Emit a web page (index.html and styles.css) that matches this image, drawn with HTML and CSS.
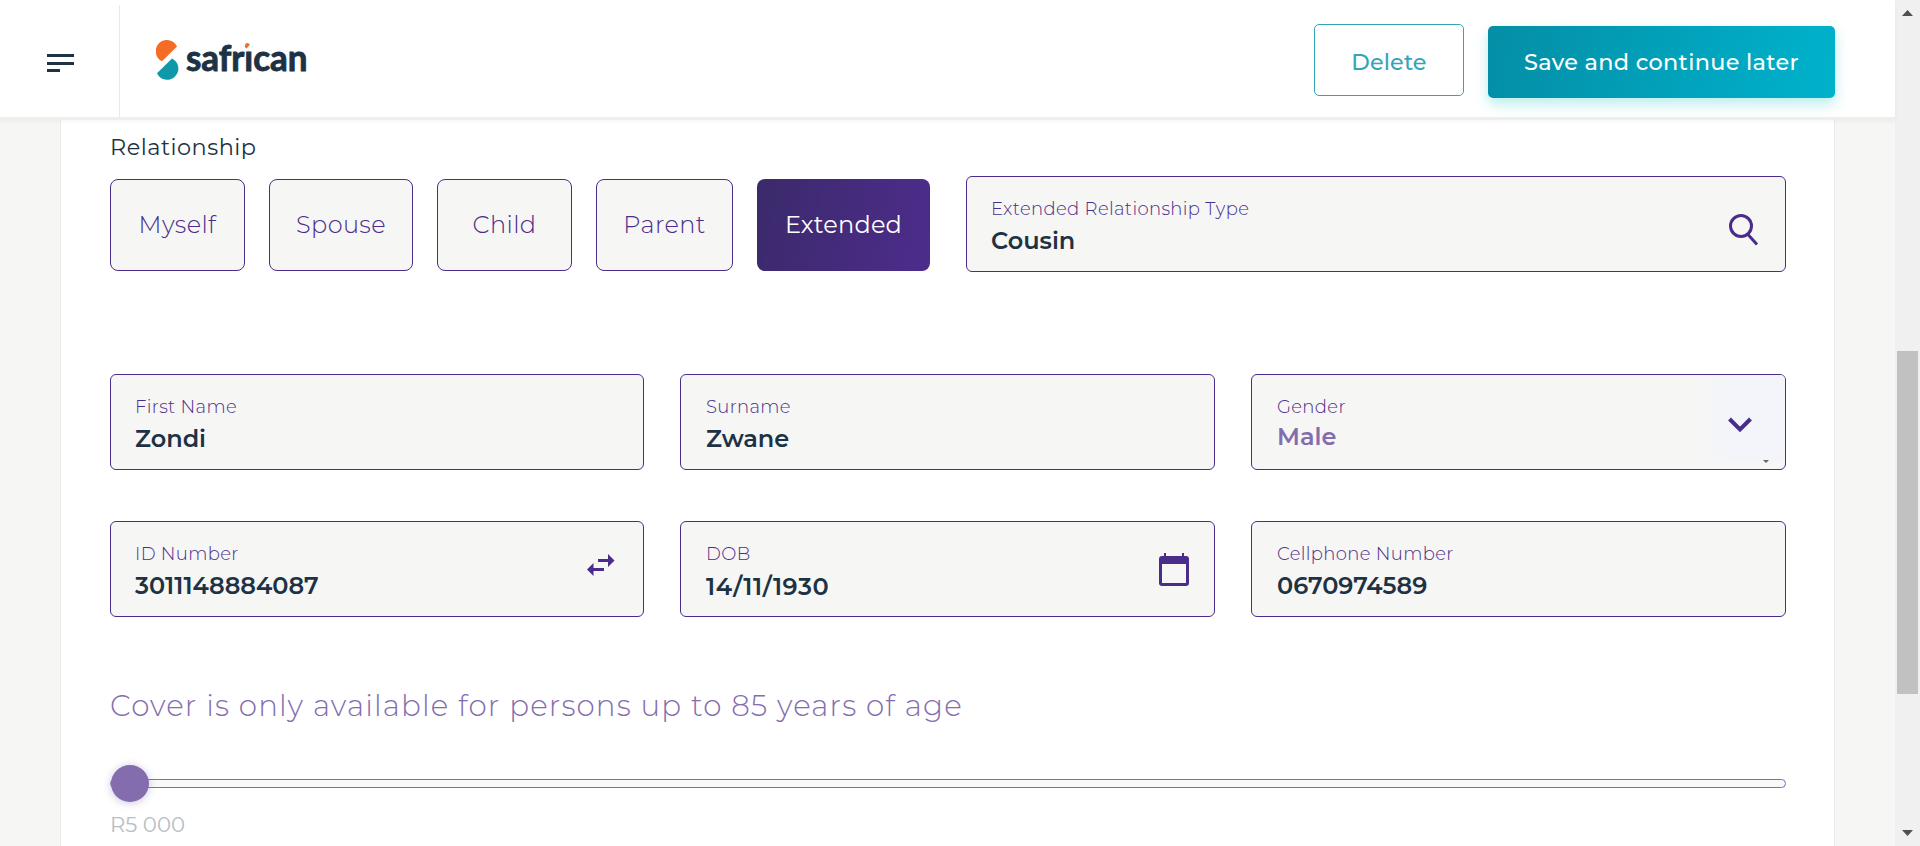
FILE: index.html
```html
<!DOCTYPE html>
<html lang="en">
<head>
<meta charset="utf-8">
<title>Safrican</title>
<link rel="stylesheet" href="styles.css">
</head>
<body>
<div class="page">
  <header class="header">
    <div class="menu">
      <svg width="27" height="18" viewBox="0 0 27 18" fill="#1d3244"><path d="M0 0h27v3H0zM0 8h27v3H0zM0 15h13v3H0z"/></svg>
    </div>
    <svg class="logo" width="164" height="44" viewBox="0 0 164 44">
      <path d="M6 21.300A11.200 11.200 0 1 1 21 6.500z" fill="#f46c25"/>
      <path d="M16 18.500A11.200 11.200 0 1 1 1 33.300z" fill="#0e98aa"/>
      <text class="wordmark" x="30" y="31" textLength="121.500" lengthAdjust="spacingAndGlyphs">safrican</text>
      <path d="M87 1h9v9.500h-9z" fill="#fff"/>
      <path d="M90.500 8.500a2.800 2.800 0 1 1 3.500-4z" fill="#f46c25"/>
    </svg>
    <div class="actions">
      <button class="btn delete">Delete</button>
      <button class="btn save">Save and continue later</button>
    </div>
  </header>
  <main class="card">
    <p class="caption">Relationship</p>
    <div class="relationship">
      <button class="choice w-myself">Myself</button>
      <button class="choice w-spouse">Spouse</button>
      <button class="choice w-child">Child</button>
      <button class="choice w-parent">Parent</button>
      <button class="choice w-extended selected">Extended</button>
      <div class="field type">
        <span class="label">Extended Relationship Type</span><span class="value">Cousin</span>
        <svg class="icon search" width="32" height="34" viewBox="0 0 32 34" fill="none" stroke="#4a2c8a" stroke-width="3"><circle cx="13" cy="13" r="10.500"/><path d="M19.500 21l9.500 10.500"/></svg>
      </div>
    </div>
    <div class="grid">
      <div class="field"><span class="label">First Name</span><span class="value">Zondi</span></div>
      <div class="field inset"><span class="label">Surname</span><span class="value">Zwane</span></div>
      <div class="field inset"><span class="label">Gender</span><span class="value soft">Male</span>
        <span class="arrow"><svg width="24" height="16" viewBox="0 0 24 16" fill="none" stroke="#4a2c8a" stroke-width="4"><path d="M1.500 2L12 12.500 22.500 2"/></svg></span>
        <svg class="caret" width="6" height="3" viewBox="0 0 6 3"><path d="M0 0h6L3 3z" fill="#666"/></svg>
      </div>
      <div class="field"><span class="label">ID Number</span><span class="value">3011148884087</span>
        <svg class="icon swap" width="28" height="22" viewBox="0 0 28 22" fill="#4a2c8a"><path d="M11 5h10V0l6.500 6.500L21 13V8H11zM17 14H6.500V9L0 15.500 6.500 22v-5H17z"/></svg>
      </div>
      <div class="field inset"><span class="label">DOB</span><span class="value date">14/11/1930</span>
        <svg class="icon calendar" width="30" height="33" viewBox="0 0 30 33" fill="#4a2c8a"><path fill-rule="evenodd" d="M5 0h2v3h16V0h2v3h2a3 3 0 0 1 3 3v24a3 3 0 0 1-3 3H3a3 3 0 0 1-3-3V6a3 3 0 0 1 3-3h2zM3 11v19h24V11z"/></svg>
      </div>
      <div class="field inset"><span class="label">Cellphone Number</span><span class="value">0670974589</span></div>
    </div>
    <h2 class="notice">Cover is only available for persons up to 85 years of age</h2>
    <div class="slider"><span class="thumb"></span></div>
    <p class="amount">R5 000</p>
  </main>
  <div class="scrollbar">
    <svg width="11" height="6" viewBox="0 0 11 6"><path d="M5.500 0L11 6H0z" fill="#505050"/></svg>
    <span class="track-thumb"></span>
    <svg class="down" width="11" height="6" viewBox="0 0 11 6"><path d="M0 0h11L5.500 6z" fill="#505050"/></svg>
  </div>
</div>
</body>
</html>
```
FILE: styles.css
```css
* { box-sizing: border-box; }
body { margin: 0; font-family: Montserrat, Inter, "Open Sans", sans-serif; color: #1d3244; }
.page { display: grid; grid-template-columns: 1895px 25px; grid-template-rows: 120px 726px; height: 846px; overflow: hidden; background: #f6f6f4; }
.header { display: flex; align-items: flex-start; background: #fff; border-bottom: 3px solid #eeeeea; box-shadow: 0 2px 4px rgba(0,0,0,.04); position: relative; z-index: 1; }
.menu { width: 120px; height: 112px; margin-top: 5px; padding: 49px 0 0 47px; border-right: 1px solid #e9e9e7; }
.menu svg { display: block; }
.logo { margin: 40px 0 0 36px; }
.wordmark { font: 700 36px Lato, sans-serif; fill: #1d3244; stroke: #1d3244; stroke-width: .9px; }
.actions { margin-left: auto; padding: 24px 60px 0 0; display: flex; gap: 24px; }
button { font-family: inherit; padding: 0; }
.btn { height: 72px; border-radius: 5px; font-size: 22.400px; font-weight: 500; letter-spacing: .3px; }
.delete { width: 150px; padding-top: 4px; border: 1px solid #34a5b8; background: #fff; color: #34a5b8; letter-spacing: .1px; }
.save { width: 347px; margin-top: 2px; border: 0; color: #fff; background: linear-gradient(100deg, #048ea6, #00b2cc); box-shadow: 0 6px 14px rgba(0,185,190,.28); }
.card { width: 1775px; margin-left: 60px; padding: 14px 48px 0 49px; background: #fff; border: solid #ebebe8; border-width: 0 1px; }
.caption { margin: 0; font-size: 22.400px; line-height: 26px; letter-spacing: .5px; }
.relationship { display: flex; align-items: center; gap: 24px; height: 96px; margin-top: 16px; }
.choice { height: 92px; margin-top: 2px; padding-bottom: 2px; border: 1px solid #4a2c8a; border-radius: 8px; background: #f6f6f4; color: #4a2c8a; font-size: 24px; font-weight: 300; letter-spacing: .4px; }
.w-myself, .w-child { width: 135px; }
.w-spouse { width: 144px; }
.w-parent { width: 137px; }
.w-extended { width: 173px; }
.selected { color: #fff; font-weight: 400; letter-spacing: .2px; border: 0; background: linear-gradient(100deg, #3b2a6b, #4d2c8b); }
.field { position: relative; height: 96px; padding: 21px 24px 0; border: 1px solid #4a2c8a; border-radius: 6px; background: #f6f6f4; display: flex; flex-direction: column; }
.inset { padding-left: 25px; }
.type { flex: 1; margin-left: 12px; }
.label { font-size: 18px; line-height: 22px; font-weight: 300; color: #4a2c8a; letter-spacing: .35px; }
.value { margin-top: 5px; font-size: 24px; line-height: 32px; font-weight: 600; }
.soft { color: #836dae; margin-top: 3px; }
.date { margin-top: 6px; letter-spacing: .55px; }
.icon { position: absolute; }
.search { right: 25px; top: 36px; }
.swap { right: 28px; top: 32px; }
.calendar { right: 25px; top: 31px; }
.arrow { position: absolute; right: 0; top: 0; width: 96px; height: 86px; padding: 42px 0 0 39px; border-radius: 0 5px 0 0; background: linear-gradient(90deg, #f6f6f4, #f4f5fa 40px); }
.arrow svg { display: block; }
.caret { position: absolute; right: 16px; bottom: 6px; }
.grid { display: grid; grid-template-columns: 534px 535px 535px; column-gap: 36px; row-gap: 51px; margin-top: 102px; }
.notice { margin: 69px 0 0; font-size: 29.300px; line-height: 40px; font-weight: 300; letter-spacing: 1.150px; color: #836dae; }
.slider { position: relative; height: 9px; margin-top: 53px; border: 1px solid #836dae; border-radius: 5px; background: #f9f9f8; }
.thumb { position: absolute; left: 0; top: -15px; width: 38px; height: 37px; border-radius: 50%; background: #836dae; box-shadow: 0 1px 8px rgba(131,109,174,.4); }
.amount { margin: 22px 0 0; font-size: 21.200px; line-height: 28px; font-weight: 400; color: #b7bec5; }
.scrollbar { grid-column: 2; grid-row: 1 / 3; display: flex; flex-direction: column; align-items: center; background: #f0f0f0; padding: 10px 0; }
.track-thumb { width: 21px; height: 343px; margin-top: 335px; background: #c1c1c1; }
.down { margin-top: auto; }
```
